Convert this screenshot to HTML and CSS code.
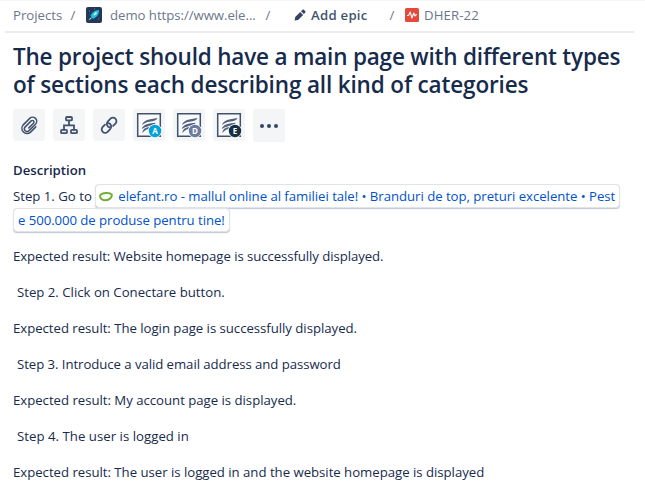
FILE: index.html
```html
<!DOCTYPE html>
<html lang="en">
<head>
<meta charset="utf-8">
<title>DHER-22</title>
<link rel="stylesheet" href="styles.css">
</head>
<body>
<header class="crumbs">
  <span class="crumb projects">Projects</span><span class="sep">/</span>
  <svg class="avatar" viewBox="0 0 16 16"><rect width="16" height="16" rx="2" fill="#253858"/><path d="M3.500 8.500 7 5l3.500 4-3 3.500-1-3z" fill="#087fa5"/><path d="M5 10c.5-4.500 4-6.800 8-7 0 4-2 7.500-6.500 8.500z" fill="#20c5df"/><path d="M8 8l2.500-2.500" stroke="#e5fbff" stroke-width="1.200"/><path d="M2.500 13.500l2-3 1.200 1z" fill="#b6dce9"/><path d="M3 4h1M12 12h1M8 2h1" stroke="#8292ad" stroke-width=".7"/></svg>
  <span class="crumb demo">demo https://www.ele...</span><span class="sep">/</span>
  <svg class="pencil" viewBox="0 0 12 12"><path d="M.6 11.500 1.200 8l5-5 2.900 2.900-5 5zM7 2.200l1.300-1.300c.5-.5 1.200-.5 1.700 0l1.200 1.200c.4.5.4 1.100 0 1.600L9.800 5z" fill="#344563"/></svg>
  <span class="crumb epic">Add epic</span><span class="sep">/</span>
  <svg class="bug" viewBox="0 0 14 14"><rect width="14" height="14" rx="1.500" fill="#e5493a"/><path d="M2 7.500h1.500L5.200 4l1.700 6 1.900-5 1.200 3 .8-1.200H12" fill="none" stroke="#fff" stroke-width="1.100" stroke-linejoin="round"/></svg>
  <span class="crumb key">DHER-22</span>
</header>
<main>
  <h1><span class="t1">The project should have a main page with different types</span><br><span class="t2">of sections each describing all kind of categories</span></h1>
  <div class="tools">
    <button aria-label="Attach"><svg class="clip" viewBox="0 0 24 24"><path d="M11.800 14.900l4.700-4.700a1.600 1.600 0 0 0-2.300-2.300l-6.200 6.200a2.700 2.700 0 0 0 3.800 3.800l6.700-6.700a4.100 4.100 0 0 0-5.800-5.800L6 12.100a5.200 5.200 0 0 0 7.300 7.300l5.500-5.500"/></svg></button>
    <button aria-label="Add child"><svg viewBox="0 0 24 24"><rect x="9" y="4" width="6" height="3.400" rx="1"/><rect x="4" y="16.800" width="6" height="3.400" rx="1"/><rect x="14" y="16.800" width="6" height="3.400" rx="1"/><path d="M12 8v4M7 16.500V12.300h10v4.200"/></svg></button>
    <button aria-label="Link"><svg viewBox="0 0 24 24"><path d="M12.900 14.300a3.500 3.500 0 0 1-2.200-5.800l2.800-2.800a3.400 3.400 0 0 1 4.900 4.900l-2.300 2.300M11.200 10.200a3.500 3.500 0 0 1 2.200 5.800l-2.800 2.800a3.400 3.400 0 0 1-4.900-4.900L8 11.600"/></svg></button>
    <button aria-label="A"><svg class="app" viewBox="0 0 28 28"><use href="#wing"/><circle class="ring" cx="20" cy="20" r="7"/><circle cx="20" cy="20" r="6.200" fill="#00a3d9"/><text x="20" y="23">A</text></svg></button>
    <button aria-label="D"><svg class="app" viewBox="0 0 28 28"><use href="#wing"/><circle class="ring" cx="20" cy="20" r="7"/><circle cx="20" cy="20" r="6.200" fill="#6b7ba0"/><text x="20" y="23">D</text></svg></button>
    <button aria-label="E"><svg class="app" viewBox="0 0 28 28"><use href="#wing"/><circle class="ring" cx="20" cy="20" r="7"/><circle cx="20" cy="20" r="6.200" fill="#172f42"/><text x="20" y="23">E</text></svg></button>
    <button class="more" aria-label="More"><svg class="dots" viewBox="0 0 24 24"><circle cx="5" cy="12" r="2"/><circle cx="12" cy="12" r="2"/><circle cx="19" cy="12" r="2"/></svg></button>
  </div>
  <h2>Description</h2>
  <div class="body">
    <p class="first"><span class="s1">Step 1. Go to</span> <a class="card"><svg class="fav" viewBox="0 0 14 12"><path d="M1.300 4c2-2.500 9.700-2.800 11.300-.6C13.500 6 10.500 9 6.500 9.200 2.500 9.500.5 6.500 1.300 4z"/></svg><span class="c1">elefant.ro - mallul online al familiei tale! • Branduri de top, preturi excelente • Pest</span><br><span class="c2">e 500.000 de produse pentru tine!</span></a></p>
    <p><span class="e1">Expected result: Website homepage is successfully displayed.</span></p>
    <p class="step"><span class="s2">Step 2. Click on Conectare button.</span></p>
    <p><span class="e2">Expected result: The login page is successfully displayed.</span></p>
    <p class="step"><span class="s3">Step 3. Introduce a valid email address and password</span></p>
    <p><span class="e3">Expected result: My account page is displayed.</span></p>
    <p class="step"><span class="s4">Step 4. The user is logged in</span></p>
    <p><span class="e4">Expected result: The user is logged in and the website homepage is displayed</span></p>
  </div>
</main>
<svg width="0" height="0"><defs><g id="wing"><path d="M2.700 2.700h22.600v22.600H2.700z" fill="#f8f9fb" stroke="#42526e" stroke-width="1.500"/><path d="M7 14C8.500 8.800 14 8.500 22.500 7c-1.500 3.500-6 3.300-9.500 4-2.500.5-4 1.500-6 3zM6.800 18c1.500-5 7-5.500 14-6.200-2 3.200-5 2.700-8.200 3.600-2.600.6-3.800 1.200-5.800 2.600zM7.300 22c.8-4.500 3-5.600 7.700-5.800-1.200 2-2.800 1.700-4.200 2.700-1.400.8-2.200 1.700-3.500 3.100z" fill="#53627f"/></g></defs></svg>
</body>
</html>
```
FILE: styles.css
```css
* { box-sizing: border-box; }
body {
  margin: 0;
  height: 499px;
  overflow: hidden;
  background: #fff;
  color: #172b4d;
  font: 13.2px/24px "Open Sans", "Noto Sans", sans-serif;
  border-top: 1px solid #f4f5f7;
}
.crumbs {
  display: flex;
  align-items: center;
  height: 32px;
  margin: 0 11px 0 5px;
  padding: 0 0 3px 8px;
  border-bottom: 2px solid #ebecf0;
  color: #6b778c;
  white-space: nowrap;
}
.crumbs svg { flex: none; }
.sep { flex: none; width: 6px; text-align: center; }
.projects { width: 57px; }
.avatar { width: 16px; height: 16px; margin: 0 8px 0 10px; }
.demo { width: 155px; letter-spacing: -.04px; }
.pencil { width: 12px; height: 12px; margin: 0 5px 0 23px; }
.epic { width: 78px; color: #42526e; font-weight: 600; letter-spacing: .25px; }
.bug { width: 14px; height: 14px; margin: 0 5px 0 10px; }
.key { letter-spacing: .1px; }
main { padding: 10px 0 0 13px; }
h1 {
  margin: 0;
  font-size: 22.5px;
  line-height: 28px;
  font-weight: 600;
  white-space: nowrap;
}
.t1 { letter-spacing: -.19px; }
.t2 { letter-spacing: -.15px; }
.tools { display: flex; gap: 8px; margin-top: 10px; }
button {
  display: grid;
  place-items: center;
  width: 32px;
  height: 32px;
  padding: 0;
  border: 0;
  border-radius: 3px;
  background: #f4f5f7;
}
.more { height: 33px; margin-bottom: -1px; }
button svg {
  width: 24px;
  height: 24px;
  fill: none;
  stroke: #42526e;
  stroke-width: 1.8;
  stroke-linecap: round;
}
button .clip { stroke-width: 1.5; }
button .app { width: 28px; height: 28px; stroke: none; }
.ring { fill: #f4f5f7; }
.app text { fill: #fff; font: 700 8px "Open Sans", sans-serif; text-anchor: middle; }
button .dots { fill: #344563; stroke: none; }
h2 { margin: 17px 0 0; font-size: 13.2px; line-height: 24px; font-weight: 600; }
.body { white-space: nowrap; }
p { margin: 0 0 12px; height: 24px; }
.body .first { height: 48px; margin-top: 2px; }
.step { padding-left: 4px; }
.card {
  margin-left: 1px;
  padding: 2px 4px 2px 3px;
  border-radius: 3px;
  box-shadow: 0 0 0 1px #e0e3e8, 0 1px 1px 1px #c1c7d0;
  box-decoration-break: clone;
  -webkit-box-decoration-break: clone;
  color: #0052cc;
}
.fav { width: 14px; height: 12px; margin-right: 5px; vertical-align: -2px; fill: #fff; stroke: #70ad35; stroke-width: 2; }
.c1 { letter-spacing: -.04px; }
.c2, .s3 { letter-spacing: -.06px; }
.c2 { margin-left: 1px; }
.e1 { letter-spacing: -.07px; }
.e2 { letter-spacing: -.03px; }
.e3, .e4 { letter-spacing: -.02px; }
.s4 { letter-spacing: .03px; }
```
